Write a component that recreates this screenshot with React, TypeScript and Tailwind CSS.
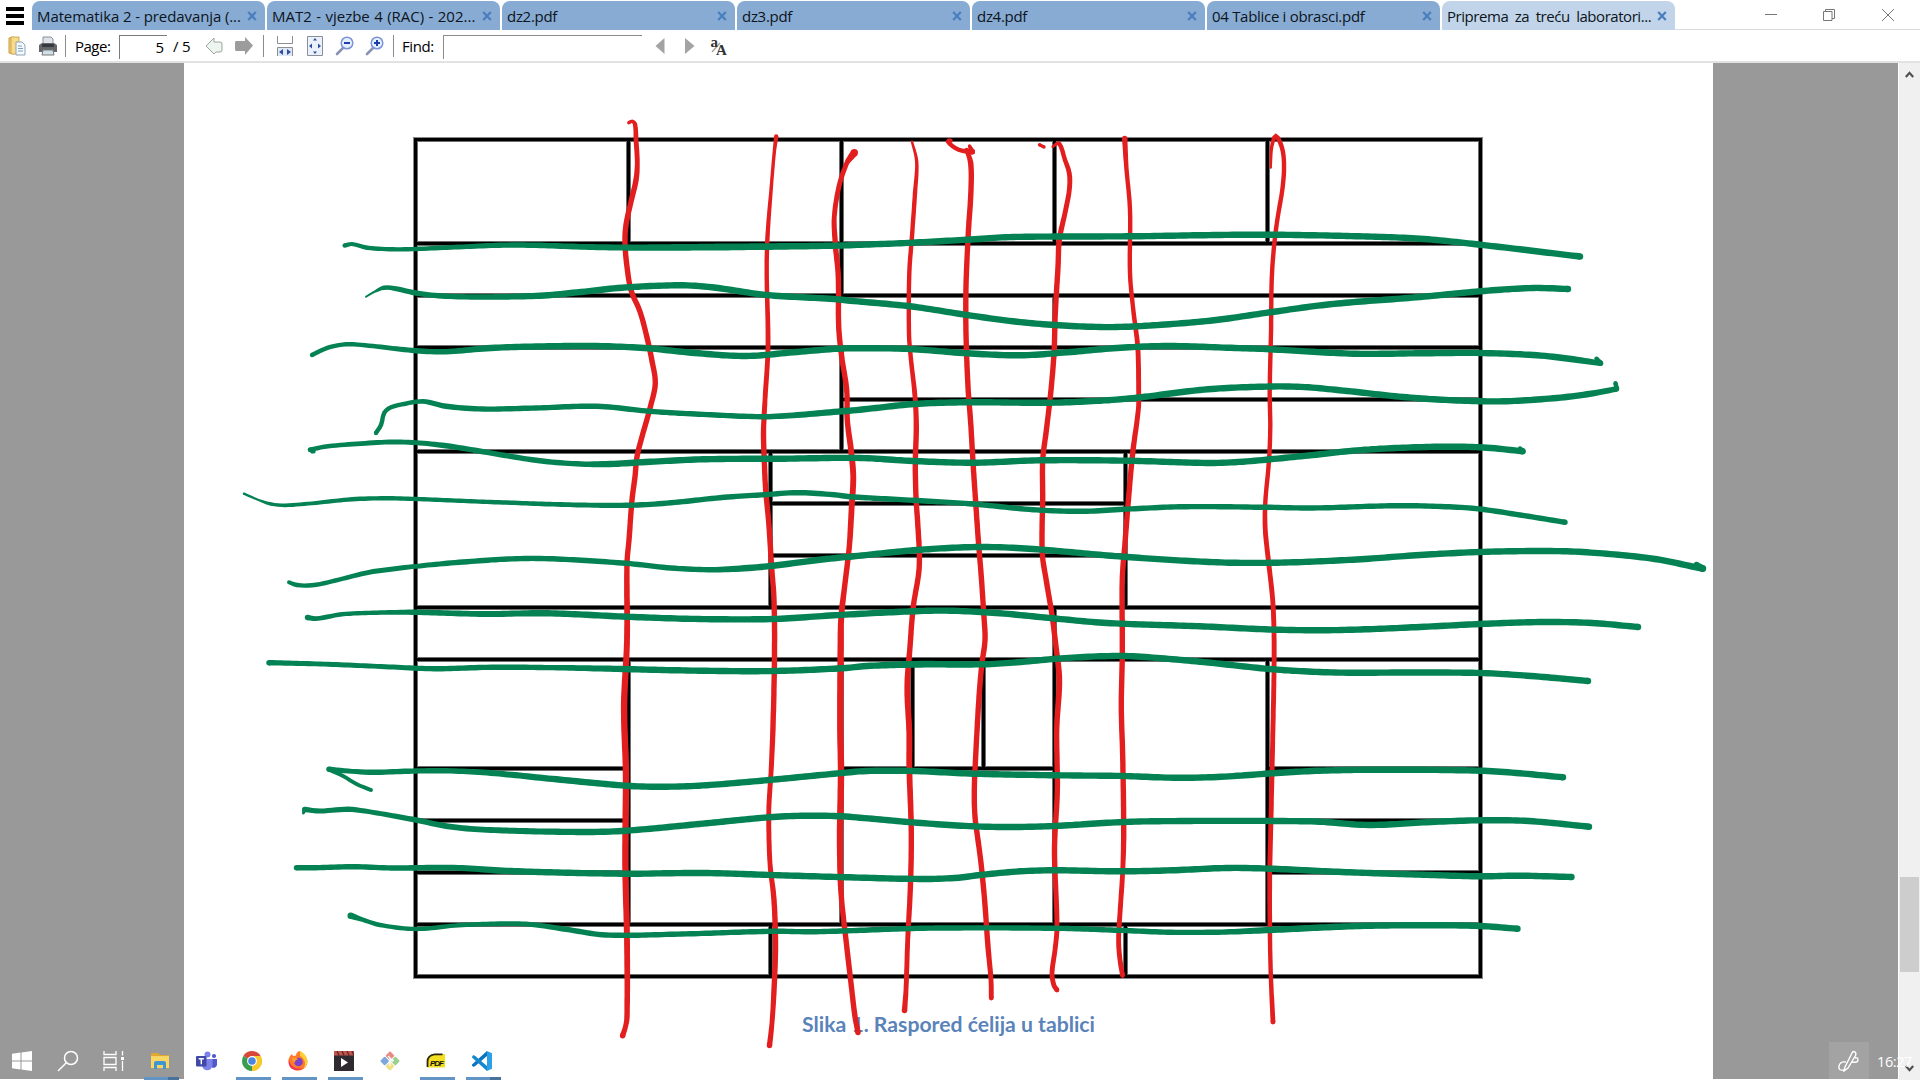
import React from "react";

type Pt = [number, number, number?];

const UI_FONT = "font-['Open_Sans','Noto_Sans',sans-serif]";

/* ---------- tab strip ---------- */

const tabs = [
  { title: "Matematika 2 - predavanja (...", cls: "tracking-[-0.1px]" },
  { title: "MAT2 - vjezbe 4 (RAC) - 202...", cls: "tracking-[0px] [word-spacing:0.5px]" },
  { title: "dz2.pdf", cls: "tracking-[-0.3px]" },
  { title: "dz3.pdf", cls: "tracking-[-0.3px]" },
  { title: "dz4.pdf", cls: "tracking-[-0.3px]" },
  { title: "04 Tablice i obrasci.pdf", cls: "tracking-[-0.3px]" },
  { title: "Priprema za treću laboratori...", cls: "tracking-[-0.45px] [word-spacing:3px]", active: true },
];

function Tab({ title, cls, active }: { title: string; cls: string; active?: boolean }) {
  return (
    <div
      className={
        "flex h-[29px] w-[233px] shrink-0 items-center justify-between rounded-t-[8px] pl-[5px] pr-[8px] " +
        (active ? "bg-[#c1d4e9]" : "bg-[#88abd3]")
      }
    >
      <span className={"whitespace-nowrap text-[15px] leading-[28px] text-[#0c1420] " + cls}>{title}</span>
      <svg width="10" height="10" viewBox="0 0 10 10" className="shrink-0">
        <path d="M1.2 1 8.8 9M8.8 1 1.2 9" stroke="#4a7fbd" strokeWidth="2.3" />
      </svg>
    </div>
  );
}

function TabStrip() {
  return (
    <div className="flex h-[30px] items-end bg-white">
      <div className="flex h-[30px] w-[32px] shrink-0 flex-col items-start gap-[3px] pl-[6px] pt-[7px]">
        <div className="h-[4px] w-[18px] bg-black" />
        <div className="h-[4px] w-[18px] bg-black" />
        <div className="h-[4px] w-[18px] bg-black" />
      </div>
      <div className="flex gap-[2px]">
        {tabs.map((t) => (
          <Tab key={t.title} {...t} />
        ))}
      </div>
      <div className="flex h-[30px] flex-1 items-center justify-end border-b border-[#dcdcdc]">
        <svg width="178" height="28" viewBox="0 0 178 28" fill="none" stroke="#777" strokeWidth="1">
          <path d="M23 13.5h12" />
          <path d="M81.500 10.500h8.500v9h-8.500zM83.500 10.500v-2h9v9h-2.500" />
          <path d="M140 8l12 12M152 8l-12 12" />
        </svg>
      </div>
    </div>
  );
}

/* ---------- toolbar ---------- */

function Sep() {
  return <div className="h-[22px] w-px bg-[#8c8c8c]" />;
}

function Magnifier({ plus }: { plus?: boolean }) {
  return (
    <svg width="20" height="20" viewBox="0 0 20 20">
      <path d="M8 12 2 18" stroke="#8a94b0" strokeWidth="2.6" strokeLinecap="round" />
      <circle cx="12" cy="7" r="5.800" fill="#e6efff" stroke="#7c92d6" strokeWidth="1.500" />
      <path d="M9 7h6" stroke="#1d3fae" strokeWidth="2" />
      {plus && <path d="M12 4v6" stroke="#1d3fae" strokeWidth="2" />}
    </svg>
  );
}

function Toolbar() {
  return (
    <div className="flex h-[33px] items-center border-b-2 border-[#e2e2e2] bg-white pt-[1px] text-[15px] text-black">
      <div className="flex w-[34px] justify-center">
        <svg width="18" height="20" viewBox="0 0 18 20">
          <path d="M1 2 6 1v17l-5-1z" fill="#f3cf74" stroke="#c99b3d" />
          <path d="M3 1h8v17H3z" fill="#f7dc8e" stroke="#c99b3d" strokeWidth=".8" />
          <path d="M8 6h6l3 3v10H8z" fill="#f4faff" stroke="#8ea3b5" />
          <path d="M10 10h4M10 12.500h5M10 15h5" stroke="#7ba0ba" />
        </svg>
      </div>
      <div className="flex w-[28px] justify-center">
        <svg width="20" height="20" viewBox="0 0 20 20">
          <path d="M5 1h8l2 2v6H5z" fill="#dde3e8" stroke="#8b8f94" />
          <path d="M1 9l3-2h12l3 2v7H1z" fill="#63666b" />
          <path d="M4 8h12v3H4z" fill="#37393c" />
          <path d="M5 14h10l1 5H4z" fill="#cfe0ea" stroke="#777" />
        </svg>
      </div>
      <div className="w-[3px]" />
      <Sep />
      <span className="ml-[9px] w-[44px] tracking-[-0.5px]">Page:</span>
      <div className="mt-[2px] h-[24px] w-[48px] border-l border-t border-[#7a7a7a] pr-[3px] text-right leading-[23px]">5</div>
      <span className="ml-[6px] w-[27px] tracking-[-0.2px]">/ 5</span>
      <div className="flex w-[30px] justify-center">
        <svg width="20" height="20" viewBox="0 0 20 20">
          <path d="M1 10 9 2v4h6q2 0 2 2v6q0 2-2 2h-4l-2 2z" fill="#eef4ee" stroke="#9aa79c" />
        </svg>
      </div>
      <div className="flex w-[28px] justify-center">
        <svg width="20" height="20" viewBox="0 0 20 20">
          <path d="M19 9.500 11 1v4H2q-1 0-1 2v6q0 2 1 2h9v4z" fill="#9c9c9c" />
        </svg>
      </div>
      <div className="w-[5px]" />
      <Sep />
      <div className="flex w-[41px] justify-center">
        <svg width="18" height="20" viewBox="0 0 18 20">
          <path d="M1.500 0v7.500h15V0" fill="#fff" stroke="#8a8f96" />
          <path d="M1.500 20v-8.500h15V20" fill="#dfe8f5" stroke="#8a8f96" />
          <path d="M7 13v6l-4-3zM11 13v6l4-3z" fill="#2f4f9d" />
        </svg>
      </div>
      <div className="flex w-[20px] justify-center">
        <svg width="18" height="20" viewBox="0 0 18 20">
          <path d="M1.500.5h15v19h-15z" fill="#eaf1fa" stroke="#8a9099" />
          <path d="M9 2l2 2.500h-4zM9 18l2-2.500h-4zM3 10l3-2.500v5zM15 10l-3-2.500v5z" fill="#2f4f9d" />
        </svg>
      </div>
      <div className="flex w-[40px] justify-center"><Magnifier /></div>
      <div className="flex w-[20px] justify-center"><Magnifier plus /></div>
      <div className="w-[8px]" />
      <Sep />
      <span className="ml-[8px] w-[41px] tracking-[-0.4px]">Find:</span>
      <div className="mt-[2px] h-[24px] w-[199px] border-l border-t border-[#8c8c8c]" />
      <svg width="100" height="22" viewBox="0 0 100 22" className="ml-[4px]">
        <path d="M18.500 3v16L9.500 11z" fill="#a3a3a3" />
        <path d="M39 3v16l9.500-8z" fill="#a3a3a3" />
        <path d="M74 8 66 17" stroke="#a5a5a5" strokeWidth="1.500" />
        <text x="64.500" y="11.500" fontSize="15" fontWeight="700" fontFamily="Liberation Serif, serif" fill="#333">a</text>
        <text x="70" y="19.500" fontSize="15" fontWeight="700" fontFamily="Liberation Serif, serif" fill="#333">A</text>
      </svg>
    </div>
  );
}

/* ---------- table figure ---------- */

/* [row, rowSpan, col, colSpan] */
const cells: [number, number, number, number][] = [
  [1, 1, 1, 3], [1, 1, 4, 3], [1, 1, 7, 3], [1, 1, 10, 3], [1, 1, 13, 3],
  [2, 1, 1, 6], [2, 1, 7, 9],
  [3, 1, 1, 9], [3, 1, 10, 6],
  [4, 2, 1, 6], [4, 1, 7, 9], [5, 1, 7, 9],
  [6, 3, 1, 5], [6, 1, 6, 5], [7, 1, 6, 5], [8, 1, 6, 5], [6, 3, 11, 5],
  [9, 1, 1, 9], [9, 1, 10, 6],
  [10, 1, 1, 3], [11, 1, 1, 3], [12, 1, 1, 3], [13, 1, 1, 3],
  [10, 4, 4, 3],
  [10, 1, 7, 1], [10, 1, 8, 1], [10, 1, 9, 1], [11, 3, 7, 3],
  [10, 4, 10, 3],
  [10, 1, 13, 3], [11, 1, 13, 3], [12, 1, 13, 3], [13, 1, 13, 3],
  [14, 1, 1, 5], [14, 1, 6, 5], [14, 1, 11, 5],
];

function CellTable() {
  return (
    <div className="grid w-[1068px] grid-cols-[repeat(15,minmax(0,1fr))] grid-rows-[99px_repeat(8,47px)_104px_repeat(4,47px)] gap-[5px] bg-black p-[4px] shadow-[0_0_0_1px_#8a8a8a]">
      {cells.map(([r, rs, c, cs], i) => (
        <div
          key={i}
          className="bg-white shadow-[0_0_0_1px_#6e6e6e]"
          style={{ gridRow: `${r} / span ${rs}`, gridColumn: `${c} / span ${cs}` }}
        />
      ))}
    </div>
  );
}

/* ---------- ink strokes ---------- */

const green: Pt[][] = [
  [[344.7,245.5,4],[352,244,3.5],[367,247.7,4],[393,249.3,4],[416,249,4],[458.6,247,4.5],[515.7,245,5],[589,247,5.5],[638,247.6,6],[720,247,6.500],[834,245.7],[873,244.3],[912,242.7],[967,239.7],[1013,237],[1130,236.3],[1217,235],[1267,234.7],[1347,236],[1420,238.7],[1480,244.7],[1580,256.500]],
  [[366,296.7,1.500],[375,291.5,2],[384,287.7,4],[394,288.3,4.5],[416,293,5],[442,296,5],[483,297,5],[540,295.7],[581,292],[622,287.7],[679,285.3],[712,287.3],[767,295],[834,299],[850,300.7],[910,306.3],[967,315],[1013,321.3],[1055,325],[1100,327],[1137,326.3],[1210,320.7],[1270,312.3],[1330,304.3],[1420,297],[1480,291.3],[1533,288],[1568,289]],
  [[312,355,4],[328,347.7,4],[346,344.3,4],[365,345.3,4],[416,350.7,5],[446,351.7,5],[491,348],[548,346.3],[597,346],[648,348.3],[695,353],[746,356],[793,352.3],[838,348.7],[867,348.3],[910,349],[967,353.3],[1020,355.3],[1067,352.3],[1117,348],[1167,346],[1227,347.7],[1270,349.3],[1353,353.7],[1420,353.3],[1480,353],[1537,355.3],[1573,359.3],[1600.500,363.3,5]],
  [[1596.500,358.7,4],[1600.500,363.3,5]],
  [[376,433,4],[381,425,4],[384.3,412.7,4],[391,407.3,4],[405.5,403.7,4],[416,401.7,4],[426,401.7,4.5],[446,406.3,5],[483,409,5],[536,408,5],[597,406.3,5],[650,411.3,5],[695,414,5],[760,416.7,5],[793,415.3,5.5],[842,411.3],[860,409.7],[915,404],[967,402.3],[1050,402.7],[1100,400.7],[1137,397.7],[1200,390],[1243,387.3],[1297,386.7],[1347,391],[1403,397],[1453,400.3],[1503,401.3],[1553,398.3],[1587,394.3],[1616.500,389,5]],
  [[1616.700,388.500,4.5],[1615.500,383.300,4]],
  [[313,450.9,5],[310,449.7,4]],
  [[310,449.7,4],[328,446.3,4],[365,443.3,4.5],[393,442,4.500],[416,442.7,4.5],[446,445.7,5],[479,451,5],[516,457.3,5],[548,461.7,5],[581,464,5],[610,464],[646,462],[703,459.3],[781,458.7],[860,458],[913,461],[973,462.7],[1040,460.3],[1127,460.7],[1210,463],[1243,461.7],[1270,459.3],[1320,454.3],[1353,450.7],[1403,447.7],[1453,446.7],[1487,447.7],[1522.500,451.3,6]],
  [[1520,448.500,4],[1523,451.500,5]],
  [[244,493.7,2],[258.6,500,2],[271,504,3],[285,505.3,3.500],[312,503.3,3.5],[352,499.3,4],[385,498.3,4],[416,499,4],[491,502,4],[581,505,4.5],[638,505,5],[679,502,5],[724,497.3,5],[765,494.7,5],[797,492.7,5],[834,494.7,5],[850,496.7,5],[913,500.3,5],[973,504,5],[1033,509.7,5],[1083,511.3,5],[1123,509.3,5],[1183,506.7,5],[1267,507.3,5],[1313,508,5],[1397,505.7,5],[1453,507,5],[1480,509,5],[1520,515,5],[1565,522.3,5]],
  [[289,582.3,3.5],[297,585,4],[312,585.3,4],[328,582.3,4],[369,572.3,4.5],[393,569,4.5],[416,566.3,4.500],[459,562.3,5],[516,558.7,5],[557,559,5],[626,563.3,5],[671,568,5],[712,569.7,5],[744,568.3],[773,565.7],[826,559],[850,556.7],[917,550],[980,547],[1033,549],[1123,556.7],[1217,562.3],[1277,562.7],[1353,559.7],[1420,555],[1480,552],[1543,551],[1587,552.3],[1653,558.7],[1702.500,568.700,6]],
  [[1696.500,564.500,5],[1703,568.500,6]],
  [[307.5,617.500,5],[316,618.7,4.500],[342,614.3,4],[377,612.7,4],[416,612.3,5],[483,614,5.5],[548,613.3],[626,616.7],[699,619],[773,619],[834,615.3],[912,611.3],[950,610.7],[1000,613.3],[1057,618.7],[1107,623],[1200,626.3],[1277,629.7],[1341,630],[1420,627],[1480,624],[1543,622],[1592,623],[1638,627]],
  [[269,662.7,5],[320,664,4.5],[377,666.3,4.5],[434,668.7,5],[491,667.3,5],[557,667.7,5],[622,669],[699,670.7],[773,671],[842,668.3],[867,666],[917,664.3,6.500],[983,664.3,6],[1017,662.3],[1057,658.7],[1100,656.3],[1133,656.3],[1200,661.7],[1273,669.3],[1335,672.5],[1408,672.500],[1480,673],[1531,676],[1588,681]],
  [[371,790,3.5],[356.5,784,3.5],[343,776,3.5],[329,769.3,4]],
  [[329,769.3,5],[352,771.3,4.5],[373,772.3,5],[416,771,5],[454.5,771,5],[495,773.3,5.5],[556.5,779.3],[626,785.7],[659,786.7],[699,785.7],[769,780],[842,773],[867,771],[913,771],[973,773.7],[1057,775.3],[1123,776],[1173,777.7],[1217,777],[1277,773],[1319.5,770.7],[1386,769.7],[1480,770.7],[1520,773.3],[1563,777.3]],
  [[303.3,813.3,2],[304.7,809.5,4]],
  [[304.7,809.5,5],[320,811,4.5],[348,809.3,5],[369,811.7,4.5],[416,820,5],[450,826.7,5.500],[491,830,5.500],[581,832],[626,830.7],[699,824],[769,817.3],[805.5,815.7],[842,816.3],[860,817.7],[917,822.7],[973,826.3],[1017,827],[1060,825.7],[1123,822],[1183,821],[1277,821],[1319.5,821.7],[1368.6,825],[1431,822],[1480,820.3],[1529,821],[1589,826.700]],
  [[296.5,867.7,5],[315.7,867.7,5],[353.7,866.7,5],[391.6,868,5],[454,867.7,5.5],[503,870.7],[566,872.7],[628,873.7],[704,873],[771,875],[838,877],[923,879],[958.6,877.7],[980,875],[1020,871.3],[1056,870.3],[1118.6,871.3],[1172,870.3],[1226,868],[1270,868.7],[1342,872],[1431,875],[1480,876.3],[1520,875.7],[1571.5,877]],
  [[350.7,915.7,6],[362.6,919.7,4],[380,925,4],[416,929,4],[458.6,925.3,4],[503,923.7,4.5],[530,924.3,4.5],[566,929.3,5],[606,935,5],[682,934,5],[771,931.3,5],[816,931.7,5],[905,928.7,5],[940,928,5],[1056,928.3,5],[1118.6,930.3,5],[1172,932.3,5],[1226,932,5],[1270,930],[1360,926],[1431,925.3],[1480,926],[1517.5,928.7]],
];

const red: Pt[][] = [
  [[628.8,122.7,3],[632,121.3,3],[635,124,4],[636,139.3,4.5],[637.3,163.3,4.5],[636,180,5],[631,201.7,5],[626,225,5],[625,243.3,5],[627,266.7,5],[631,290,5],[640,311.7,5],[646,333.3,5],[652,361,5],[655.3,383.3,5],[650.4,406.7,5],[642,436.7,5],[637,456.7,5],[635,476.7,5],[632,500,5],[629,540,5],[627,563.3,5],[627,640,5.5],[624.3,696.7],[624.3,723.3],[626,773.3],[625.5,833.3],[625.500,873.3],[627,940,5.5],[627,1016.7,5],[625.5,1026.7,4.5],[622.6,1035.7,5]],
  [[776.2,136.5,4],[774.5,150,3],[771.6,183.3,3],[767.5,236.7,4],[766.7,273,4],[768,346.7,4.5],[765,400,4.5],[763.5,433.3,5],[764.3,460,5],[765.5,486.7,5],[768.8,523.3,5],[771.6,566.7,5],[774,600,5],[774.5,653,5],[773,726.7,5],[771,773,4.500],[768.8,811,4.5],[770,863.3,4.5],[774,900,5],[775.5,946.7,5],[774,990,5],[772,1023,4.500],[769.500,1045.500,5]],
  [[854.3,152.7,7],[851,157,6],[846.7,163.3,4.500],[839.3,185,4.5],[834.3,216.7,4.5],[835.3,243.3,5],[838.3,276.7,5],[838.7,326.7,5],[841.7,356.7,5],[846.7,390,5],[847.3,420,5],[851,450,5.5],[853.3,476.7,5.5],[851.7,506.7,5.500],[849.3,546.7,5],[845,583.3,5],[841.3,616.7,5.5],[840.7,646.7],[840.3,726.7],[841,773],[840,833],[840.3,873,5.500],[841.6,900,5],[846,940,5],[851.4,986.7,5],[855,1016.7,5],[858,1032.500,5]],
  [[912,141.7,2],[916.7,161.7,3],[915,193,4],[911.7,240,4],[909.3,273,4],[909,333,4],[910.7,356.7,4],[915,396.7,4.5],[916.3,426.7,5],[915.3,463,5],[916,496.7,5],[917.7,523,5],[919.3,553,5],[918.7,573,5],[913.3,606.7,5],[910,646.7,5],[907.3,686.7,5.500],[909.3,733,5.500],[909.3,766.7,5.5],[911.3,833,5],[910.4,886.7,5],[907.7,940,4.5],[906,990,4.500],[904.5,1010.5,5]],
  [[950.500,140.700,4],[947.500,141,4],[953.3,146.7,4],[961.7,150.7,4],[972.3,151.700,5]],
  [[969.500,146,3],[972.3,151.700,5]],
  [[966.7,150,4],[970.7,163,5],[971,190,5],[968.3,233,5],[966,286.7,5],[966,333,5],[968,386.7,5],[970.7,423,5],[973.3,466.7,5],[975.3,496.7,5],[978.3,540,5],[981,573,5],[983.7,613,5],[985,640,5],[982,663,5],[979.3,693,5],[976,750,5],[974.3,790,5],[975,816.7,5],[978,840,5],[981,863,5],[984.6,900,5],[988,946.7,5],[991,980,4.500],[991.3,998,4.500]],
  [[1039.500,144.800,3],[1044,147,3]],
  [[1052.6,146.700,2],[1059,143.3,4],[1065,160,4],[1069.3,173.3,4.500],[1069.3,190,4.5],[1065,213,4.5],[1059.3,240,5],[1058,266.7,5],[1055.3,313,5],[1054,353,5],[1050.7,393,5],[1046,433,5],[1042.7,460,5],[1042.7,497,5],[1042.3,553,5],[1046.7,583,5],[1051.7,613,5],[1056,646.7,5],[1059.3,680,5.500],[1056.7,730,5],[1057.3,790,5],[1054.7,840,5],[1054.7,863,5],[1057,926.7,4.500],[1055,950,4.5],[1052,973,4.500],[1053.8,985,4.500],[1057,990,4.5]],
  [[1124.7,138.500,5],[1126.3,166.7,4],[1130,210,4],[1130,273,4],[1133.3,310,4],[1137.7,346.7,4.500],[1138.7,393,4.5],[1138.3,410,4.500],[1132.7,453,5],[1128.7,496.7,5],[1125,543,5],[1122.3,580,5],[1122.3,653,5],[1121.3,706.7,5],[1122.7,756.7,5],[1123.7,833,5],[1122.6,873,4.500],[1120,913,4.500],[1118.6,940,4.5],[1120,960,4.5],[1122.6,975.5,4.500]],
  [[1270.7,167.500,2],[1271.7,146.7,3],[1275.7,135.700,4.500],[1281.7,146.7,4],[1284,163,4],[1282.7,186.7,4],[1277.3,220,4],[1274,246.7,4],[1271.7,280,4],[1271,333,4],[1269.7,393,4],[1270.3,426.7,4],[1269,460,4],[1265.3,503,4],[1265.3,530,4.500],[1268.7,563,4.500],[1272.7,600,4.500],[1274,633,4.5],[1274,673,4.5],[1272.7,740,4.500],[1270.5,840,4.500],[1269.7,873,4.5],[1270,940,4],[1271,980,4],[1273,1022,4.5]],
];

/* Catmull-Rom through the points, offset on both sides by half the pen width. */
function strokeOutline(raw: Pt[], base: number) {
  const p = raw.map(([x, y, w]) => [x, y, (w ?? base) + 0.4]);
  const s: number[][] = [];
  for (let i = 0; i < p.length - 1; i++) {
    const a = p[Math.max(i - 1, 0)];
    const b = p[i];
    const c = p[i + 1];
    const d = p[Math.min(i + 2, p.length - 1)];
    const len = Math.hypot(c[0] - b[0], c[1] - b[1]) || 1;
    const l0 = Math.hypot(b[0] - a[0], b[1] - a[1]);
    const l2 = Math.hypot(d[0] - c[0], d[1] - c[1]);
    const m1 = [0, 1].map((k) => ((c[k] - a[k]) / (l0 + len)) * len);
    const m2 = [0, 1].map((k) => ((d[k] - b[k]) / (l2 + len)) * len);
    const n = Math.max(3, Math.round(len / 4));
    for (let j = i === 0 ? 0 : 1; j <= n; j++) {
      const t = j / n;
      const t2 = t * t;
      const t3 = t2 * t;
      const q = [0, 1].map(
        (k) => (2 * t3 - 3 * t2 + 1) * b[k] + (t3 - 2 * t2 + t) * m1[k] + (-2 * t3 + 3 * t2) * c[k] + (t3 - t2) * m2[k]
      );
      s.push([q[0], q[1], b[2] + (c[2] - b[2]) * t]);
    }
  }
  const left: string[] = [];
  const right: string[] = [];
  s.forEach((q, i) => {
    const u = s[Math.max(i - 1, 0)];
    const v = s[Math.min(i + 1, s.length - 1)];
    const l = Math.hypot(v[0] - u[0], v[1] - u[1]) || 1;
    const nx = (-(v[1] - u[1]) / l) * (q[2] / 2);
    const ny = ((v[0] - u[0]) / l) * (q[2] / 2);
    left.push(`${(q[0] + nx).toFixed(1)} ${(q[1] + ny).toFixed(1)}`);
    right.unshift(`${(q[0] - nx).toFixed(1)} ${(q[1] - ny).toFixed(1)}`);
  });
  return { d: `M${left.join("L")}L${right.join("L")}Z`, first: s[0], last: s[s.length - 1] };
}

function Strokes({ list, color, base }: { list: Pt[][]; color: string; base: number }) {
  return (
    <g fill={color}>
      {list.map((pts, i) => {
        const o = strokeOutline(pts, base);
        return (
          <g key={i}>
            <path d={o.d} />
            <circle cx={o.first[0]} cy={o.first[1]} r={o.first[2] / 2} />
            <circle cx={o.last[0]} cy={o.last[1]} r={o.last[2] / 2} />
          </g>
        );
      })}
    </g>
  );
}

function Ink() {
  return (
    <svg width="1920" height="1080" viewBox="0 0 1920 1080" className="pointer-events-none absolute left-0 top-0">
      <Strokes list={red} color="#e31e1f" base={6} />
      <Strokes list={green} color="#048253" base={6} />
    </svg>
  );
}

/* ---------- taskbar ---------- */

const taskIcons: { icon: React.ReactNode; mark?: "one" | "many" }[] = [
  {
    icon: (
      <svg width="20" height="20" viewBox="0 0 20 20" fill="#fff">
        <path d="M0 2.800 8.500 1.600V9.500H0zM9.500 1.500 20 0v9.500H9.500zM0 10.500h8.500v7.900L0 17.200zM9.500 10.500H20V20L9.500 18.500z" />
      </svg>
    ),
  },
  {
    icon: (
      <svg width="22" height="22" viewBox="0 0 22 22" fill="none" stroke="#fff" strokeWidth="1.500">
        <circle cx="14" cy="8" r="6.500" />
        <path d="M9.300 12.700 1 21" />
      </svg>
    ),
  },
  {
    icon: (
      <svg width="22" height="20" viewBox="0 0 22 20" fill="none" stroke="#fff" strokeWidth="1.300">
        <path d="M1 0v3.500h12V0M1 20v-3.500h12V20M1 6.500h12v7H1zM19.500 0v4.500M19.500 10v10" />
        <path d="M18 6h3v3h-3z" fill="#fff" stroke="none" />
      </svg>
    ),
  },
  {
    mark: "many",
    icon: (
      <svg width="20" height="18" viewBox="0 0 20 18">
        <path d="M1 1h7l2 2h9v13H1z" fill="#e0a92e" />
        <path d="M1 4h18v12H1z" fill="#fbd665" />
        <path d="M4 17v-6q0-2 2-2h8q2 0 2 2v6h-3v-4H7v4z" fill="#3f97cf" />
      </svg>
    ),
  },
  {
    icon: (
      <svg width="21" height="20" viewBox="0 0 21 20">
        <circle cx="18" cy="5" r="2.100" fill="#5059c9" />
        <path d="M14 8h7v5.500a3.500 3.500 0 0 1-5 3z" fill="#5059c9" />
        <circle cx="11.500" cy="3.500" r="3" fill="#7b83eb" />
        <path d="M6 8h10.500v6a5.200 5.200 0 0 1-10.500 0z" fill="#7b83eb" />
        <rect x="0" y="5" width="10.500" height="10.500" rx="1" fill="#4049a8" />
        <path d="M2.700 7.700h5.200M5.300 7.700v5.600" stroke="#fff" strokeWidth="1.400" />
      </svg>
    ),
  },
  {
    mark: "one",
    icon: (
      <svg width="20" height="20" viewBox="0 0 20 20">
        <path d="M10 10 1.340 5A10 10 0 0 1 18.660 5z" fill="#d8473a" />
        <path d="M10 10 18.660 5A10 10 0 0 1 10 20z" fill="#f7c92c" />
        <path d="M10 10 10 20A10 10 0 0 1 1.340 5z" fill="#3a9d4f" />
        <path d="M10 5h8.660A10 10 0 0 1 10 20l4.300-7.500z" fill="#f7c92c" />
        <circle cx="10" cy="10" r="4.900" fill="#fff" />
        <circle cx="10" cy="10" r="3.800" fill="#4a86e0" />
      </svg>
    ),
  },
  {
    mark: "one",
    icon: (
      <svg width="20" height="20" viewBox="0 0 20 20">
        <path d="M11 0c4 2 8 6 8.500 10.500A9.500 9.500 0 1 1 2 5l2-2 1 2 3-.500C8 3 9 1 11 0z" fill="#ff7a2a" />
        <path d="M12 0c4 2 8 6 7.500 11-.500 3-2 5-4 6.500C19 12 16 7 12 5z" fill="#ffcf3a" />
        <path d="M1 8c1 8 8 11 14 9-3 3-10 3-13-1-1.500-2-1.500-5-1-8z" fill="#f0384f" />
        <circle cx="10.500" cy="11" r="4.300" fill="#7b43c9" />
        <path d="M4 7c3-1 5 0 6 1.500-2 0-3 1-3 3C5 11 4 9 4 7z" fill="#ff9a2e" />
      </svg>
    ),
  },
  {
    mark: "one",
    icon: (
      <svg width="20" height="20" viewBox="0 0 20 20">
        <rect width="20" height="20" fill="#2f2a2f" />
        <path d="M0 0h20v4.500H0z" fill="#c1554e" />
        <path d="M3 0l2 4.500M8 0l2 4.500M13 0l2 4.500M18 0l2 4.500" stroke="#5d2a2b" strokeWidth="1.300" />
        <path d="M7 7v9l7-4.500z" fill="#fff" />
      </svg>
    ),
  },
  {
    icon: (
      <svg width="20" height="20" viewBox="0 0 20 20">
        <g transform="rotate(45 10 10)">
          <rect x="3" y="3" width="6.500" height="6.500" rx="1" fill="#e88b86" />
          <rect x="10.500" y="3" width="6.500" height="6.500" rx="1" fill="#9ccf8d" />
          <rect x="3" y="10.500" width="6.500" height="6.500" rx="1" fill="#7ea7e0" />
          <rect x="10.500" y="10.500" width="6.500" height="6.500" rx="1" fill="#efe08a" />
        </g>
        <path d="M8 5l4 4M10 7v8" stroke="#fff" strokeWidth="1.200" />
        <circle cx="12.500" cy="9.500" r="1.300" fill="#fff" />
      </svg>
    ),
  },
  {
    mark: "one",
    icon: (
      <svg width="20" height="16" viewBox="0 0 20 16">
        <path d="M1 14.500V8.500q0-7.500 8-7.500h10v13.500z" fill="#f3df1f" />
        <path d="M1.500 14V8.500q0-6 7-7.200h8" fill="none" stroke="#2a2a14" strokeWidth="1.800" />
        <text x="4" y="12.500" fontSize="8" fontWeight="900" fontStyle="italic" fontFamily="Liberation Sans, sans-serif" textLength="14" fill="#111">PDF</text>
      </svg>
    ),
  },
  {
    mark: "many",
    icon: (
      <svg width="20" height="20" viewBox="0 0 20 20">
        <path d="M15 0v5L3.500 14.800 1.500 16 0 14.500 0 13.500z" fill="#0a74bd" />
        <path d="M15 20v-5L3.500 5.200 1.500 4 0 5.500v1z" fill="#1587d0" />
        <path d="M15 0l5 2.200v15.600L15 20z" fill="#2ba0e8" />
      </svg>
    ),
  },
];

function Taskbar() {
  return (
    <div className="absolute bottom-0 left-0 flex h-[38px] w-full justify-between">
      <div className="flex">
        {taskIcons.map((t, i) => (
          <div key={i} className="flex h-[38px] w-[46px] flex-col items-center justify-end">
            <div className="flex h-[35px] items-center pt-[2px] pr-[2px]">{t.icon}</div>
            <div className="flex h-[3px] w-[35px]">
              {t.mark && <div className="h-[3px] flex-1 bg-[#6394c6]" />}
              {t.mark === "many" && <div className="h-[3px] w-[11px] bg-[#4a7199]" />}
            </div>
          </div>
        ))}
      </div>
      <div className="flex">
        <div className="flex h-[37px] w-[40px] items-center justify-center bg-[#a3a3a3]">
          <svg width="22" height="22" viewBox="0 0 22 22" fill="none" stroke="#fff" strokeWidth="1.400">
            <path d="M7 17 14 3q1.500-2.500 3-1t.500 3.500L10 18l-4 3z" />
            <path d="M8 12q-6-1-7 4t5 4M14 12q6 1 6-2t-3-2" />
          </svg>
        </div>
        <span className="w-[51px] pl-[8px] text-[14.5px] leading-[40px] tracking-[-0.400px] text-white">16:27</span>
      </div>
    </div>
  );
}

/* ---------- document area ---------- */

function Viewer() {
  return (
    <div className="flex flex-1 bg-white">
      <div className="mb-px w-[184px] bg-[#999999]" />
      <div className="flex w-[1529px] flex-col items-center">
        <div className="mt-[75px] pr-[1px]">
          <CellTable />
        </div>
        <div className="mt-[32px] whitespace-nowrap font-['Lato',sans-serif] text-[21.2px] font-bold leading-[28px] text-[#5a83ba]">
          Slika 1. Raspored ćelija u tablici
        </div>
      </div>
      <div className="mb-px w-[185px] bg-[#999999]" />
      <div className="ml-px flex w-[21px] flex-col items-center justify-between bg-[#f0f0f0] pb-[8px] pt-[8px]">
        <svg width="9" height="7" viewBox="0 0 9 7" fill="none" stroke="#505050" strokeWidth="2.200">
          <path d="M.800 6 4.500 1.800 8.200 6" />
        </svg>
        <div className="mt-[706px] h-[95px] w-[19px] bg-[#cdcdcd]" />
        <svg width="9" height="7" viewBox="0 0 9 7" fill="none" stroke="#505050" strokeWidth="2.200">
          <path d="M.800 1 4.500 5.200 8.200 1" />
        </svg>
      </div>
    </div>
  );
}

export default function App() {
  return (
    <div className={"relative flex h-[1080px] w-[1920px] flex-col overflow-hidden bg-white " + UI_FONT}>
      <TabStrip />
      <Toolbar />
      <Viewer />
      <Taskbar />
      <Ink />
    </div>
  );
}
